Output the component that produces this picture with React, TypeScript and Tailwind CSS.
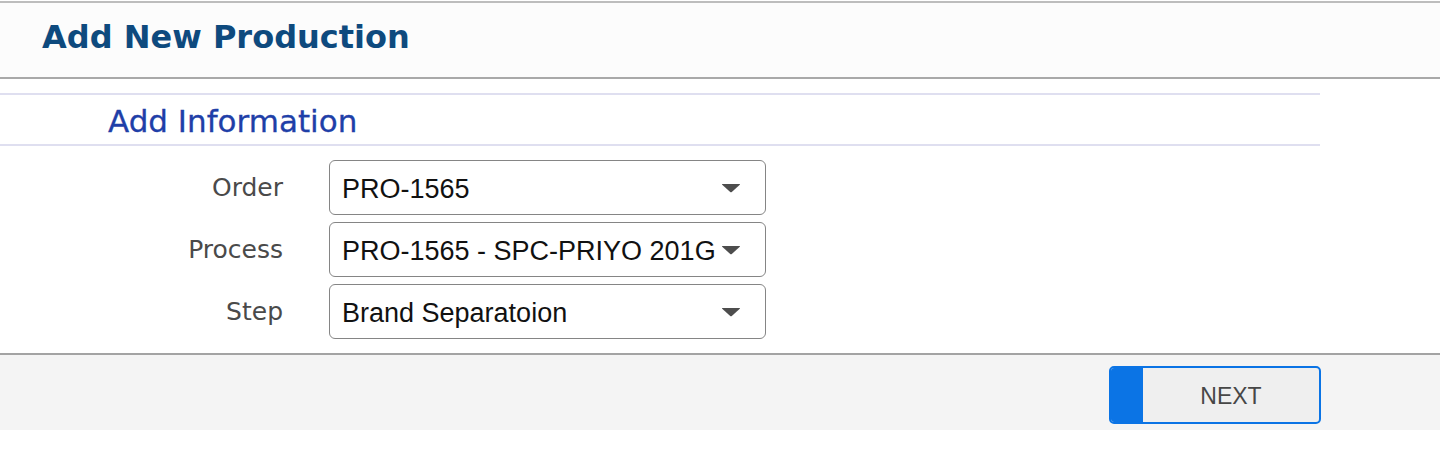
const rows = [
  { label: "Order", value: "PRO-1565" },
  { label: "Process", value: "PRO-1565 - SPC-PRIYO 201G" },
  { label: "Step", value: "Brand Separatoion" },
];

function Caret() {
  return (
    <svg width="20" height="10" viewBox="0 0 20 10" className="shrink-0">
      <path d="M1.5 1 H18.5 Q19.5 1 18.8 1.8 L10.8 9 Q10 9.7 9.2 9 L1.2 1.8 Q0.5 1 1.5 1 Z" fill="#4d4d4d" />
    </svg>
  );
}

export default function App() {
  return (
    <div className="w-[1440px] h-[459px] bg-white overflow-hidden">
      {/* Header */}
      <div className="mt-px h-[78px] border-t-2 border-b-2 border-t-[#bdbdbd] border-b-[#a9a9a9] bg-[#fcfcfc] pl-[42px] pt-[18px]">
        <h1 className="font-['DejaVu_Sans',sans-serif] font-bold text-[32px] leading-[32px] text-[#0e4a7e]">
          Add New Production
        </h1>
      </div>

      {/* Section heading */}
      <div className="mt-[14px] w-[1320px] border-t-2 border-b-2 border-[#dfdff0] pl-[108px] pt-[11px] pb-[7px]">
        <h2 className="font-['DejaVu_Sans',sans-serif] text-[31px] leading-[31px] text-[#1f3fa8] [-webkit-text-stroke:0.3px_#1f3fa8]">
          Add Information
        </h2>
      </div>

      {/* Form */}
      <div className="mt-[14px] flex flex-col gap-[7px]">
        {rows.map((row) => (
          <div key={row.label} className="flex items-center">
            <label className="w-[283px] text-right font-['DejaVu_Sans',sans-serif] text-[25px] text-[#4a4a4a]">
              {row.label}
            </label>
            <div className="ml-[46px] flex h-[55px] w-[437px] items-center rounded-[6px] border-[1.5px] border-[#858585] bg-white pl-[12px] pr-[24px]">
              <span className="min-w-0 flex-1 overflow-hidden whitespace-nowrap pt-[3px] font-['Liberation_Sans',sans-serif] text-[27px] text-[#111]">
                {row.value}
              </span>
              <Caret />
            </div>
          </div>
        ))}
      </div>

      {/* Footer */}
      <div className="mt-[14px] flex h-[77px] justify-end border-t-2 border-[#a3a3a3] bg-[#f4f4f4] pr-[119px] pt-[11px]">
        <button className="flex h-[58px] w-[212px] overflow-hidden rounded-[5px] border-2 border-[#0b74e5] bg-[#efefef]">
          <span className="w-[32px] bg-[#0b74e5]" />
          <span className="flex flex-1 items-center justify-center pt-[2px] font-['Liberation_Sans',sans-serif] text-[23px] text-[#474747]">
            NEXT
          </span>
        </button>
      </div>
    </div>
  );
}
